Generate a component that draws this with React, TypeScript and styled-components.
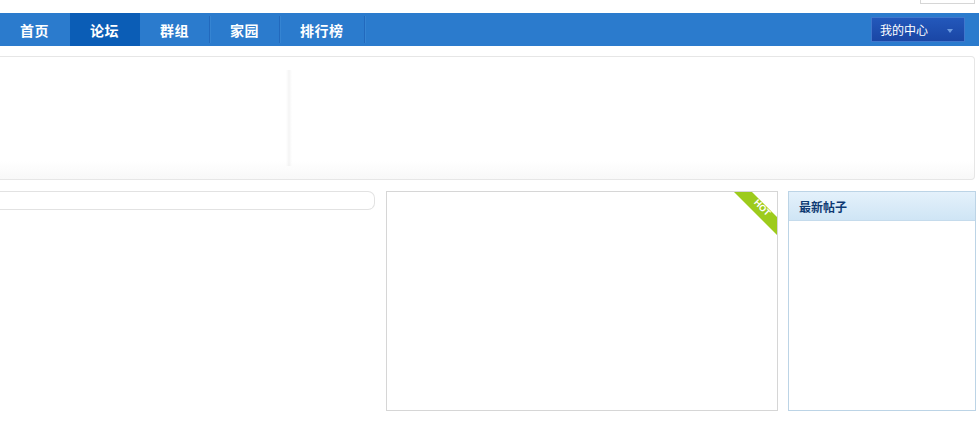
import React from "react";
import styled, { createGlobalStyle } from "styled-components";

const Global = createGlobalStyle`
  html, body { margin: 0; padding: 0; background: #fff; }
  body { font-family: "Noto Sans CJK SC", "Liberation Sans", sans-serif; font-size: 12px; }
`;

const Page = styled.div`
  width: 979px;
  height: 421px;
  overflow: hidden;
`;

const TopStrip = styled.div`
  height: 13px;
  display: flex;
  justify-content: flex-end;
  padding-right: 4px;
  box-sizing: border-box;
`;

const MiniBox = styled.div`
  width: 53px;
  height: 3px;
  border: 1px solid #d6d6d6;
  border-top: none;
`;

const NavBar = styled.div`
  height: 33px;
  background: #2b7bcd;
  display: flex;
  align-items: stretch;
  padding-right: 14px;
`;

const Tabs = styled.div`
  display: flex;
  flex: 1;
`;

const Tab = styled.a<{ $active?: boolean; $sep?: boolean }>`
  display: flex;
  align-items: center;
  padding: 0 20px;
  color: #fff;
  font-weight: 700;
  font-size: 14px;
  letter-spacing: 0.5px;
  background: ${(p) => (p.$active ? "#0b5db6" : "transparent")};
  position: relative;
  cursor: pointer;
  border-right: 1px solid transparent;
  &::after {
    content: "";
    display: ${(p) => (p.$sep ? "block" : "none")};
    position: absolute;
    right: -1px;
    top: 3px;
    bottom: 3px;
    width: 1px;
    background: #2269bd;
    box-shadow: 1px 0 0 #3584d2;
  }
`;

const Center = styled.div`
  align-self: center;
  width: 94px;
  height: 25px;
  box-sizing: border-box;
  border: 1px solid #3f76cc;
  background: linear-gradient(#2358bb, #1a46a5);
  color: #fff;
  display: flex;
  align-items: center;
  justify-content: space-between;
  padding: 0 11px 0 8px;
  font-size: 12px;
`;

const Arrow = styled.span`
  width: 0;
  height: 0;
  border-left: 3px solid transparent;
  border-right: 3px solid transparent;
  border-top: 4px solid #6c9be0;
  margin-top: 2px;
`;

const Banner = styled.div`
  margin-top: 10px;
  width: 975px;
  height: 124px;
  box-sizing: border-box;
  border: 1px solid #e6e6e6;
  border-left: none;
  border-radius: 0 4px 4px 0;
  background: linear-gradient(#fff 85%, #f8f8f8);
  display: flex;
  padding-top: 13px;
  padding-left: 286px;
`;

const Divider = styled.div`
  width: 6px;
  height: 96px;
  background: linear-gradient(to right, rgba(0,0,0,0), rgba(0,0,0,0.045), rgba(0,0,0,0));
`;

const Row = styled.div`
  margin-top: 11px;
  display: flex;
  gap: 10px;
  align-items: flex-start;
`;

const SearchCol = styled.div`
  width: 376px;
`;

const SearchBox = styled.div`
  width: 375px;
  height: 19px;
  box-sizing: border-box;
  border: 1px solid #e2e2e2;
  border-left: none;
  border-radius: 0 7px 7px 0;
`;

const HotBox = styled.div`
  position: relative;
  width: 392px;
  height: 220px;
  box-sizing: border-box;
  border: 1px solid #d6d6d6;
`;

const Ribbon = styled.div`
  position: absolute;
  top: 0;
  right: 0;
  width: 43px;
  height: 43px;
  svg { display: block; }
`;

const RibbonText = styled.span`
  position: absolute;
  left: 28px;
  top: 16px;
  transform: translate(-50%, -50%) rotate(45deg);
  color: #fff;
  font-family: "Liberation Sans", sans-serif;
  font-weight: 700;
  font-size: 9px;
  line-height: 9px;
  white-space: nowrap;
`;

const SideBox = styled.div`
  width: 188px;
  height: 220px;
  box-sizing: border-box;
  border: 1px solid #bcd4e6;
`;

const SideHead = styled.div`
  height: 28px;
  background: linear-gradient(#e4f1fb, #cfe5f5);
  border-bottom: 1px solid #c5dbec;
  display: flex;
  align-items: center;
  padding-left: 10px;
  color: #0e3a73;
  font-weight: 700;
  font-size: 12px;
`;

export default function App() {
  return (
    <Page>
      <Global />
      <TopStrip>
        <MiniBox />
      </TopStrip>
      <NavBar>
        <Tabs>
          <Tab>首页</Tab>
          <Tab $active>论坛</Tab>
          <Tab $sep>群组</Tab>
          <Tab $sep>家园</Tab>
          <Tab $sep>排行榜</Tab>
        </Tabs>
        <Center>
          我的中心
          <Arrow />
        </Center>
      </NavBar>
      <Banner>
        <Divider />
      </Banner>
      <Row>
        <SearchCol>
          <SearchBox />
        </SearchCol>
        <HotBox>
          <Ribbon>
            <svg width="43" height="43" viewBox="0 0 43 43">
              <polygon points="0,0 18,0 43,25 43,43" fill="#9dcb1c" />
            </svg>
            <RibbonText>HOT</RibbonText>
          </Ribbon>
        </HotBox>
        <SideBox>
          <SideHead>最新帖子</SideHead>
        </SideBox>
      </Row>
    </Page>
  );
}
